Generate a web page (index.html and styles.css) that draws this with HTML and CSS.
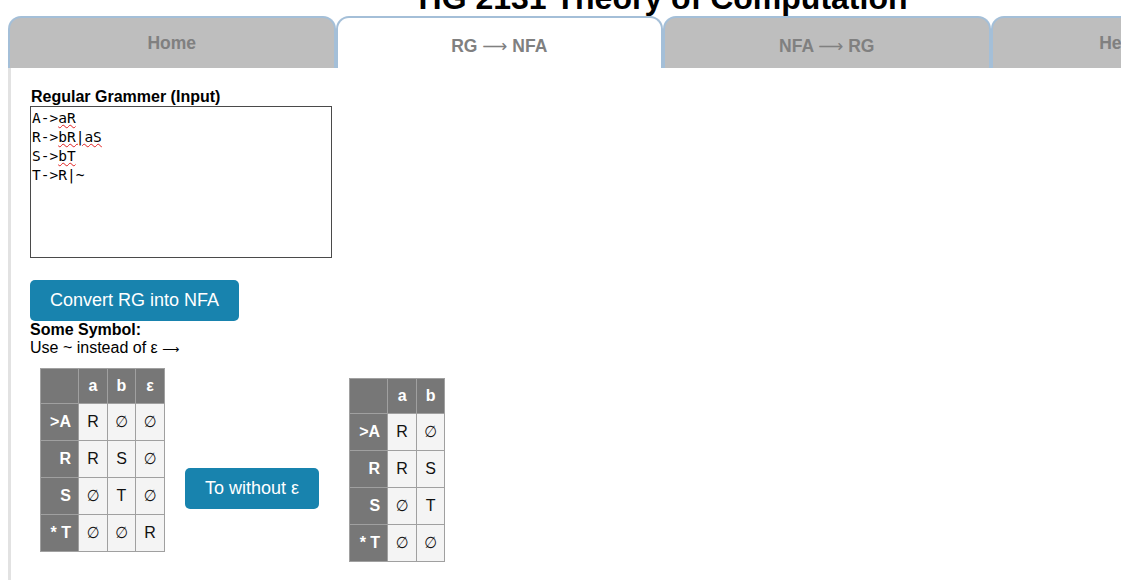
FILE: index.html
```html
<!DOCTYPE html>
<html lang="en">
<head>
<meta charset="utf-8">
<title>Theory of Computation</title>
<link rel="stylesheet" href="styles.css">
</head>
<body>
<div class="page">
  <h1 class="title">HG 2131 Theory of Computation</h1>
  <ul class="tabs">
    <li class="tab"><span>Home</span></li>
    <li class="tab tab-arrow active"><span>RG <span class="arrow">⟶</span> NFA</span></li>
    <li class="tab tab-arrow"><span>NFA <span class="arrow">⟶</span> RG</span></li>
    <li class="tab"><span>Help &amp; About</span></li>
  </ul>
  <section class="panel">
    <div class="field-label">Regular Grammer (Input)</div>
    <div class="grammar-input" role="textbox" aria-multiline="true">
      <div>A-&gt;<span class="sp">aR</span></div>
      <div>R-&gt;<span class="sp">bR|aS</span></div>
      <div>S-&gt;<span class="sp">bT</span></div>
      <div>T-&gt;R|~</div>
    </div>
    <button class="btn btn-convert">Convert RG into NFA</button>
    <div class="symbols">
      <div class="symbols-title">Some Symbol:</div>
      <div>Use ~ instead of ε <span class="sym-arrow">⟶</span></div>
    </div>
    <div class="results">
      <table class="tt tt-eps">
        <tr><th class="corner"></th><th>a</th><th>b</th><th>ε</th></tr>
        <tr><th class="rh">&gt;A</th><td>R</td><td class="e">∅</td><td class="e">∅</td></tr>
        <tr><th class="rh">R</th><td>R</td><td>S</td><td class="e">∅</td></tr>
        <tr><th class="rh">S</th><td class="e">∅</td><td>T</td><td class="e">∅</td></tr>
        <tr><th class="rh">* T</th><td class="e">∅</td><td class="e">∅</td><td>R</td></tr>
      </table>
      <button class="btn btn-without">To without ε</button>
      <table class="tt tt-noeps">
        <tr><th class="corner"></th><th>a</th><th>b</th></tr>
        <tr><th class="rh">&gt;A</th><td>R</td><td class="e">∅</td></tr>
        <tr><th class="rh">R</th><td>R</td><td>S</td></tr>
        <tr><th class="rh">S</th><td class="e">∅</td><td>T</td></tr>
        <tr><th class="rh">* T</th><td class="e">∅</td><td class="e">∅</td></tr>
      </table>
    </div>
  </section>
</div>
</body>
</html>
```
FILE: styles.css
```css
html, body {
  margin: 0;
  padding: 0;
  overflow: hidden;
  background: #fff;
}
body {
  font-family: "Liberation Sans", Arial, sans-serif;
  font-size: 16px;
  color: #000;
}
.page {
  width: 1310px;
  margin: 0 8px;
}
.title {
  margin: -20px 0 -1px;
  font-size: 32px;
  line-height: 37px;
  font-weight: bold;
  text-align: center;
}
.tabs {
  list-style: none;
  margin: 0;
  padding: 0;
  display: flex;
}
.tab {
  flex: 1 1 0;
  height: 50px;
  border: 2px solid #a4bfd8;
  border-bottom: none;
  border-radius: 13px 13px 0 0;
  background: #bebebe;
  color: #808080;
  font-weight: bold;
  font-size: 17.5px;
  display: flex;
  align-items: center;
  justify-content: center;
}
.tab-arrow {
  padding-top: 6px;
  box-sizing: border-box;
  height: 52px;
}
.tab.active {
  background: #fff;
}
.arrow {
  font-family: "DejaVu Sans", sans-serif;
  font-weight: normal;
}
.panel {
  border-left: 3px solid #e2e2e2;
  padding: 20px 19px 40px;
  min-height: 600px;
}
.field-label {
  font-weight: bold;
  line-height: 18px;
  padding-left: 1px;
}
.grammar-input {
  width: 298px;
  height: 148px;
  border: 1px solid #4a4a4a;
  padding: 2px 1px 0;
  font-family: "DejaVu Sans Mono", monospace;
  font-size: 14.5px;
  line-height: 19px;
  color: #000;
}
.sp {
  text-decoration: underline wavy #e02020;
  text-decoration-thickness: 1px;
  text-underline-offset: 1px;
}
.btn {
  display: block;
  border: none;
  border-radius: 5px;
  background: #1883ae;
  color: #fff;
  font-family: "Liberation Sans", Arial, sans-serif;
  font-size: 18px;
  line-height: 21px;
  padding: 10px 20px;
  cursor: pointer;
}
.btn-convert {
  margin-top: 22px;
}
.symbols {
  line-height: 18px;
}
.symbols-title {
  font-weight: bold;
}
.sym-arrow {
  font-family: "DejaVu Sans", sans-serif;
  font-size: 12px;
}
.results {
  display: flex;
  align-items: flex-start;
  margin-top: 10px;
}
.tt {
  border-collapse: collapse;
  border: 1px solid #a0a0a0;
}
.tt th, .tt td {
  border: 1px solid #a0a0a0;
  padding: 9px 0;
  line-height: 18px;
  height: 18px;
  text-align: center;
}
.tt tr:first-child th {
  padding-top: 8px;
  padding-bottom: 8px;
}
.tt th {
  background: #777;
  color: #fff;
  font-weight: bold;
}
.tt th.rh, .tt th.corner {
  text-align: right;
  padding-right: 7px;
  width: 30px;
}
.tt tr > :nth-child(2) {
  width: 28px;
}
.tt tr > :nth-child(3) {
  width: 27px;
}
.tt tr > :nth-child(4) {
  width: 28px;
}
.tt td {
  background: #f4f4f4;
  color: #111;
}
.tt td.e {
  font-family: "DejaVu Sans Condensed", "DejaVu Sans", sans-serif;
  font-size: 16px;
}
.tt-eps {
  margin-left: 10px;
}
.btn-without {
  margin-left: 20px;
  margin-top: 100px;
}
.tt-noeps {
  margin-left: 30px;
  margin-top: 10px;
}
```
